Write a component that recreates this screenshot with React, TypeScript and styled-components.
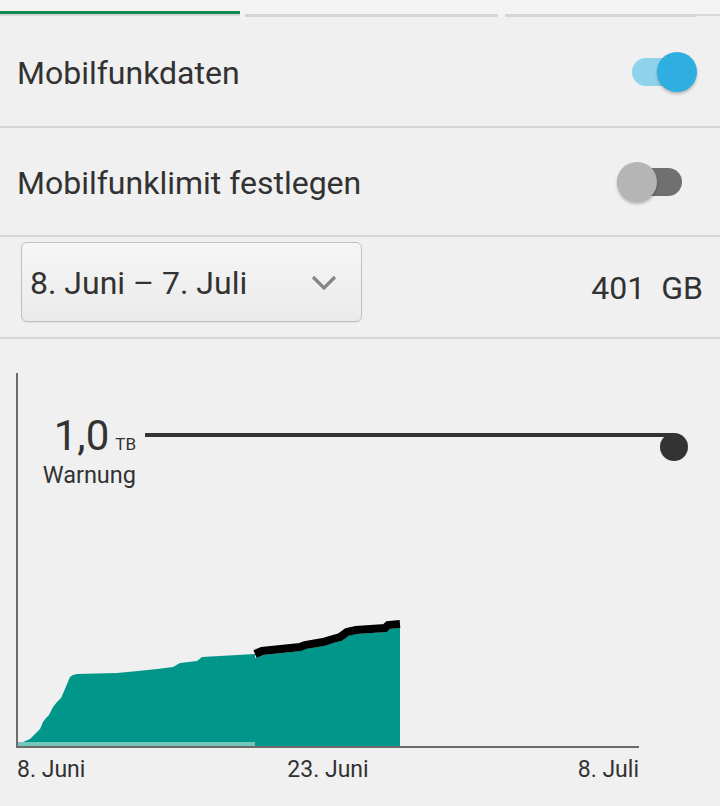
import React from "react";
import styled, { createGlobalStyle } from "styled-components";

const Global = createGlobalStyle`
  html, body { margin: 0; padding: 0; background: #f0f0f0; }
  body { font-family: Roboto, "Noto Sans", sans-serif; color: #323232; }
  * { box-sizing: border-box; }
`;

const Page = styled.div`
  width: 720px;
  height: 806px;
  overflow: hidden;
  background: #f0f0f0;
`;

const TabStrip = styled.div`
  display: flex;
  align-items: flex-start;
  height: 17px;
  padding-top: 11px;
  background: #f3f3f3;
`;

const ActiveTab = styled.div`
  width: 240px;
  height: 5px;
  border-top: 3px solid #14884d;
  border-bottom: 2px solid #d9d9d9;
`;

const Tab = styled.div<{ $w: number; $gap: number }>`
  width: ${(p) => p.$w}px;
  margin-left: ${(p) => p.$gap}px;
  margin-top: 3px;
  height: 3px;
  background: #d5d5d5;
`;

const TabTail = styled.div`
  flex: 1;
  margin-top: 3px;
  height: 2px;
  background: #dadada;
`;

const Row = styled.div<{ $h: number; $line: boolean }>`
  display: flex;
  align-items: center;
  justify-content: space-between;
  height: ${(p) => p.$h}px;
  padding: 0 0 0 17px;
  border-bottom: ${(p) => (p.$line ? "2px solid #d6d6d6" : "none")};
`;

const Label = styled.div`
  font-size: 32px;
  line-height: 36px;
  margin-top: 2px;
  color: #323232;
`;

const SwitchBox = styled.div<{ $right: number }>`
  position: relative;
  width: 72px;
  height: 40px;
  margin-right: ${(p) => p.$right}px;
`;

const Track = styled.div<{ $on: boolean }>`
  position: absolute;
  left: 7px;
  top: 6px;
  width: 58px;
  height: 28px;
  border-radius: 14px;
  background: ${(p) => (p.$on ? "#8ed2ec" : "#707070")};
`;

const Thumb = styled.div<{ $on: boolean }>`
  position: absolute;
  top: 0;
  left: ${(p) => (p.$on ? 32 : 0)}px;
  width: 40px;
  height: 40px;
  border-radius: 50%;
  background: ${(p) => (p.$on ? "#2eaee1" : "#b5b5b5")};
  box-shadow: 0 2px 3px rgba(0, 0, 0, 0.25);
`;

const Switch = ({ on, right }: { on: boolean; right: number }) => (
  <SwitchBox $right={right}>
    <Track $on={on} />
    <Thumb $on={on} />
  </SwitchBox>
);

const RangeRow = styled.div`
  display: flex;
  align-items: center;
  justify-content: space-between;
  height: 104px;
  padding: 0 17px 0 21px;
  border-top: 2px solid #d6d6d6;
  border-bottom: 2px solid #d6d6d6;
`;

const Dropdown = styled.div`
  display: flex;
  align-items: center;
  justify-content: space-between;
  width: 341px;
  height: 80px;
  margin-bottom: 11px;
  padding: 0 24px 0 8px;
  border: 1px solid #bfbfbf;
  border-radius: 6px;
  background: linear-gradient(#f6f6f6, #eaeaea);
  box-shadow: 0 1px 1px rgba(0, 0, 0, 0.06);
`;

const DropText = styled.span`
  font-size: 32px;
  line-height: 36px;
  margin-top: 2px;
  color: #323232;
`;

const Amount = styled.div`
  display: flex;
  align-items: baseline;
  gap: 16px;
  font-size: 32px;
  line-height: 36px;
  margin-top: 2px;
  color: #323232;
`;

const ChartSection = styled.div`
  position: relative;
  padding-top: 31px;
`;

const ChartSvg = styled.svg`
  display: block;
  width: 720px;
  height: 382px;
`;

const WarnLabel = styled.div`
  position: absolute;
  right: 584px;
  top: 74px;
  display: flex;
  flex-direction: column;
  align-items: flex-end;
  color: #323232;
`;

const WarnValue = styled.div`
  display: flex;
  align-items: baseline;
  gap: 6px;
  font-size: 42px;
  line-height: 46px;
`;

const WarnUnit = styled.span`
  font-size: 17px;
`;

const WarnText = styled.div`
  font-size: 23.5px;
  line-height: 28px;
  margin-top: -6px;
`;

const AxisLabels = styled.div`
  display: grid;
  grid-template-columns: 1fr auto 1fr;
  width: 622px;
  margin: 5px 0 0 17px;
  font-size: 23px;
  line-height: 26px;
  color: #323232;
`;

const AxisLabel = styled.span<{ $align: string }>`
  text-align: ${(p) => p.$align};
`;

const areaPath =
  "M18 747 L18 745 L23 742 L30 739 L35 734 L40 729 L43 722 L46 718 L49 715 L53 707 L57 702 L61 698 L65 689 L70 677 L73 675 L77 674 L117 673 L138 671 L157 669 L173 667 L180 663 L197 661 L202 657 L255 654 L255 658 L262 655 L300 651 L305 649 L323 646 L333 643 L340 641 L347 636 L356 634 L385 632 L388 629 L400 628 L400 747 Z";

const blackPath =
  "M255 654 L262 651 L300 647 L305 645 L323 642 L333 639 L340 637 L347 632 L356 630 L385 628 L388 625 L400 624";

export default function App() {
  return (
    <Page>
      <Global />
      <TabStrip>
        <ActiveTab />
        <Tab $w={253} $gap={5} />
        <Tab $w={191} $gap={7} />
        <TabTail />
      </TabStrip>
      <Row $h={111} $line>
        <Label>Mobilfunkdaten</Label>
        <Switch on right={23} />
      </Row>
      <Row $h={107} $line={false}>
        <Label>Mobilfunklimit festlegen</Label>
        <Switch on={false} right={31} />
      </Row>
      <RangeRow>
        <Dropdown>
          <DropText>8. Juni – 7. Juli</DropText>
          <svg width="26" height="16" viewBox="0 0 26 16">
            <path d="M2 3 L13 14 L24 3" fill="none" stroke="#868686" strokeWidth="3.2" />
          </svg>
        </Dropdown>
        <Amount>
          <span>401</span>
          <span>GB</span>
        </Amount>
      </RangeRow>
      <ChartSection>
        <ChartSvg viewBox="0 370 720 382">
          <line x1="17" y1="373" x2="17" y2="748" stroke="#6b6b6b" strokeWidth="2" />
          <path d={areaPath} fill="#00968a" />
          <rect x="18" y="742" width="237" height="4" fill="#74c5bb" />
          <path d={blackPath} fill="none" stroke="#000" strokeWidth="8" />
          <line x1="16" y1="747" x2="639" y2="747" stroke="#6b6b6b" strokeWidth="2" />
          <line x1="145" y1="435" x2="674" y2="435" stroke="#333" strokeWidth="4" />
          <circle cx="674" cy="447" r="14" fill="#333" />
        </ChartSvg>
        <WarnLabel>
          <WarnValue>
            <span>1,0</span>
            <WarnUnit>TB</WarnUnit>
          </WarnValue>
          <WarnText>Warnung</WarnText>
        </WarnLabel>
        <AxisLabels>
          <AxisLabel $align="left">8. Juni</AxisLabel>
          <AxisLabel $align="center">23. Juni</AxisLabel>
          <AxisLabel $align="right">8. Juli</AxisLabel>
        </AxisLabels>
      </ChartSection>
    </Page>
  );
}
